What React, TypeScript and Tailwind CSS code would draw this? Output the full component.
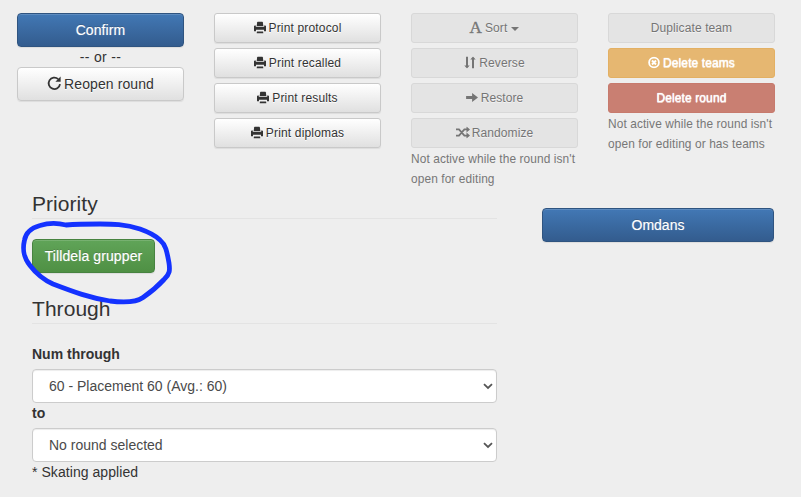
import type { ReactNode } from "react";

const raised =
  "shadow-[inset_0_1px_0_rgba(255,255,255,0.15),0_1px_1px_rgba(0,0,0,0.075)]";

const look = {
  primary: `border-[#2f5480] bg-linear-to-b from-[#4278b5] to-[#335c8e] text-white [text-shadow:0_-1px_0_rgba(0,0,0,0.2),0_0_1px_rgba(255,255,255,0.5)] ${raised}`,
  success: `border-[#478340] bg-linear-to-b from-[#60a458] to-[#4f9044] text-white [text-shadow:0_-1px_0_rgba(0,0,0,0.2),0_0_1px_rgba(255,255,255,0.5)] ${raised}`,
  plain: `border-[#c9c9c9] bg-linear-to-b from-white to-[#e0e0e0] text-[#333] [text-shadow:0_1px_0_#fff] ${raised}`,
  off: "border-[#d8d8d8] bg-[#e4e4e4] text-[#757575] [text-shadow:0_1px_0_#f3f3f3]",
  warning: "border-[#e3b063] bg-[#e6b771] text-white [text-shadow:0_1px_0_rgba(255,255,255,0.6),0_0_1px_#fff]",
  danger: "border-[#c77a6d] bg-[#c97f72] text-white [text-shadow:0_1px_0_rgba(255,255,255,0.6),0_0_1px_#fff]",
};

type Look = keyof typeof look;

function Button({ kind, large, className = "tracking-[0.1px]", children }: { kind: Look; large?: boolean; className?: string; children: ReactNode }) {
  return (
    <button
      type="button"
      className={`flex items-center justify-center whitespace-pre border ${
        large ? "h-[34px] rounded-[4px] text-sm" : "h-[30px] rounded-[3px] text-xs"
      } ${look[kind]} ${className}`}
    >
      {children}
    </button>
  );
}

function PrintButton({ children }: { children: ReactNode }) {
  return (
    <Button kind="plain" className="tracking-[0.16px]">
      <Printer />
      {children}
    </Button>
  );
}

function Printer() {
  return (
    <svg className="mr-[3px] size-3 -translate-y-[0.5px]" viewBox="0 0 12 12" fill="currentColor">
      <path d="M4 0h4q.7 0 .9.9L9.300 4.600H2.700L3.100.9Q3.300 0 4 0z" />
      <path d="M.6 4.100h1.200V5.300h8.400V4.100h1.200l.6.7v4.900H10V8.300H2v1.400H0V4.800z" />
      <path d="M3 9.200h6v.8H3z" fill="#f4f4f4" />
      <path d="M3 10h6l.3 1.500q0 .5-.5.500H3.200q-.5 0-.5-.5z" />
    </svg>
  );
}

function Repeat() {
  return (
    <svg className="mr-[2px] size-[15px] -translate-y-px" viewBox="0 0 15 15" fill="none">
      <path d="M11.2 3.1A5.7 5.7 0 1 0 13 8.1" stroke="currentColor" strokeWidth="1.8" />
      <path d="M13.6.6v5.2H8.4z" fill="currentColor" />
    </svg>
  );
}

function UpDown() {
  return (
    <svg className="mr-[3px] size-3 -translate-y-[0.5px]" viewBox="0 0 12 12" fill="currentColor">
      <path d="M2 0h2v8.900h1.700L3 12 .3 8.900H2zM8 12h2V3.100h1.700L9 0 6.300 3.100H8z" />
    </svg>
  );
}

function RightArrow() {
  return (
    <svg className="mr-[3px] size-3 -translate-y-[0.5px]" viewBox="0 0 12 12" fill="currentColor">
      <path d="M.1 4.4h6V1.6L12 6 6.1 10.4V7.6h-6z" />
    </svg>
  );
}

function Shuffle() {
  return (
    <svg className="mr-[2px] h-3 w-[14px] -translate-y-[0.5px]" viewBox="0 0 14 12">
      <g fill="none" stroke="currentColor" strokeWidth="1.8">
        <path d="M0 2.9h3l5.4 6.2H11M0 9.1h3l5.4-6.2H11" />
      </g>
      <path d="M10.5 0 14 2.9l-3.5 3zM10.5 6.1 14 9.1l-3.5 2.9z" fill="currentColor" />
    </svg>
  );
}

function RemoveCircle() {
  return (
    <svg className="mr-[3px] size-3 -translate-y-[0.5px]" viewBox="0 0 12 12" fill="none" stroke="currentColor">
      <circle cx="6" cy="6" r="4.9" strokeWidth="1.8" />
      <path d="m4 4 4 4M8 4 4 8" strokeWidth="1.9" />
    </svg>
  );
}

function Select({ value }: { value: string }) {
  return (
    <div className="relative h-[34px]">
      <select className="block h-full w-full appearance-none rounded-[4px] border border-[#ccc] bg-white pl-4 text-sm text-[#4a4a4a] shadow-[inset_0_1px_1px_rgba(0,0,0,0.075)]">
        <option>{value}</option>
      </select>
      <svg className="pointer-events-none absolute top-[14px] right-[4px] h-[7px] w-[10px]" viewBox="0 0 10 7" fill="none">
        <path d="m1 1.2 4 3.7 4-3.7" stroke="#555" strokeWidth="1.8" />
      </svg>
    </div>
  );
}

function Legend({ children }: { children: ReactNode }) {
  return (
    <h2 className="mb-5 h-[31px] border-b border-[#e3e3e3] text-[21px] leading-[31px] tracking-[0.05px]">{children}</h2>
  );
}

function Note({ children }: { children: ReactNode }) {
  return <p className="-mt-[4px] whitespace-nowrap text-[11.9px] leading-5 tracking-[0.1px] text-[#777]">{children}</p>;
}

export default function App() {
  return (
    <div className="relative h-[497px] w-[801px] overflow-hidden bg-[#eee] font-['Liberation_Sans',Arial,sans-serif] text-sm leading-5 text-[#333]">
      <div className="box-content grid h-[175px] grid-cols-[repeat(4,167px)] gap-x-[30px] pt-[13px] pl-[17px]">
        <div className="flex flex-col">
          <Button kind="primary" large>Confirm</Button>
          <div className="h-5 text-center tracking-[0.3px]">-- or --</div>
          <Button kind="plain" large><Repeat />Reopen round</Button>
        </div>
        <div className="flex flex-col gap-[5px]">
          <PrintButton>Print protocol</PrintButton>
          <PrintButton>Print recalled</PrintButton>
          <PrintButton>Print results</PrintButton>
          <PrintButton>Print diplomas</PrintButton>
        </div>
        <div className="flex flex-col gap-[5px]">
          <Button kind="off">
            <span className="mr-[3px] -translate-y-px font-['Liberation_Serif',serif] text-[17px] leading-none [-webkit-text-stroke:0.4px_currentColor]">A</span>
            Sort
            <span className="mt-[2px] ml-1 border-x-4 border-t-4 border-x-transparent border-t-current" />
          </Button>
          <Button kind="off"><UpDown />Reverse</Button>
          <Button kind="off"><RightArrow />Restore</Button>
          <Button kind="off"><Shuffle />Randomize</Button>
          <Note>Not active while the round isn't<br />open for editing</Note>
        </div>
        <div className="flex flex-col gap-[5px]">
          <Button kind="off">Duplicate team</Button>
          <Button kind="warning"><RemoveCircle />Delete teams</Button>
          <Button kind="danger">Delete round</Button>
          <Note>Not active while the round isn't<br />open for editing or has teams</Note>
        </div>
      </div>

      <div className="flex items-start gap-[45px] pl-8">
        <div className="w-[465px]">
          <Legend>Priority</Legend>
          <Button kind="success" large className="mb-5 w-[123px] tracking-[0.1px]">Tilldela grupper</Button>
          <Legend>Through</Legend>
          <div className="mb-[5px] font-bold">Num through</div>
          <Select value="60 - Placement 60 (Avg.: 60)" />
          <div className="mb-[5px] font-bold">to</div>
          <Select value="No round selected" />
          <div className="tracking-[0.06px]">* Skating applied</div>
        </div>
        <Button kind="primary" large className="mt-5 w-[232px]">Omdans</Button>
      </div>

      {/* Hand-drawn marker ring around the group assignment button */}
      <svg className="pointer-events-none absolute top-[215px] left-[15px] h-[95px] w-[165px]" viewBox="15 215 165 95" fill="none">
        <path
          d="M66 225C58 223 48 223 40 225.5C31 228 26 232 24.5 240C22 251 24 258 30 265.5C35 272 44 280 53 284C74 292 90 298 110 301C122 302.5 136 302.5 143 297.5C151 292 158 286 164 279.5C170 274 170 270 169 263C167 252 166 245 160 240C155 235 147 231.5 140 229C125 224 112 224 100 224C88 224 78 224 66 225Z"
          stroke="#1432ff"
          strokeWidth="4.8"
          strokeLinejoin="round"
        />
      </svg>
    </div>
  );
}
